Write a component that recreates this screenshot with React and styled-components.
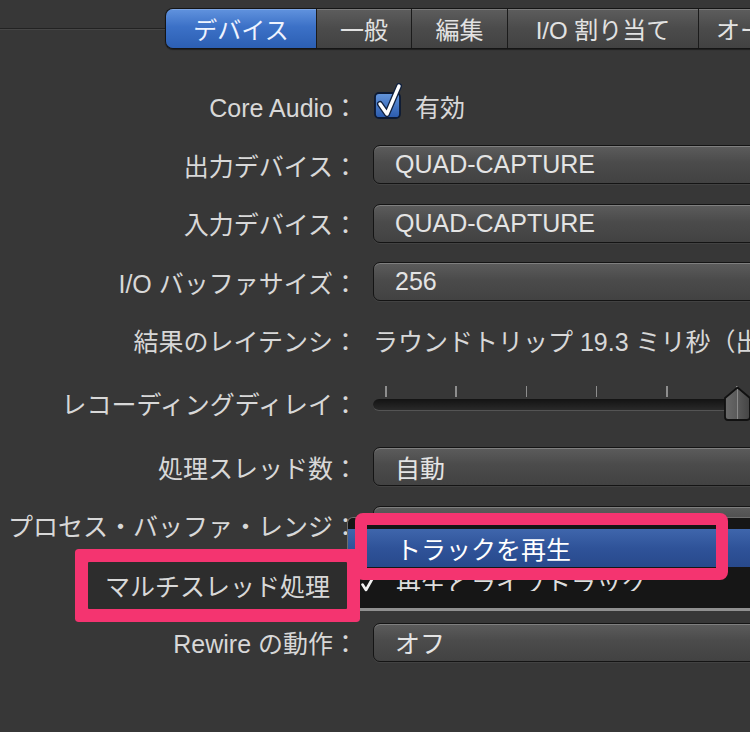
import styled, { createGlobalStyle } from "styled-components";

const GlobalStyle = createGlobalStyle`
  html, body {
    margin: 0;
    padding: 0;
    background: #373737;
  }
  body {
    font-family: "Liberation Sans", "Noto Sans CJK JP", sans-serif;
  }
`;

const Screen = styled.div`
  position: relative;
  width: 750px;
  height: 732px;
  overflow: hidden;
  background: #373737;
  color: #dadada;
  font-size: 25px;
`;

const TabStrip = styled.div`
  display: flex;
  align-items: center;
  padding-top: 9px;
  height: 39px;
`;

const Rule = styled.div`
  flex: 0 0 165px;
  height: 0;
  border-top: 1px solid #222;
  border-bottom: 1px solid #464646;
`;

const Tabs = styled.div`
  display: flex;
  flex-shrink: 0;
  height: 39px;
  border: 1px solid #151515;
  border-right: none;
  border-radius: 8px 0 0 8px;
  overflow: hidden;
  box-shadow: 0 1px 1px rgba(0, 0, 0, 0.45);
`;

const Tab = styled.div`
  flex: 0 0 ${(p) => p.$w}px;
  display: flex;
  align-items: center;
  justify-content: ${(p) => (p.$lead ? "flex-start" : "center")};
  padding-left: ${(p) => (p.$lead ? 17 : 0)}px;
  box-sizing: border-box;
  white-space: nowrap;
  font-size: 24px;
  color: ${(p) => (p.$active ? "#eef3ff" : "#e2e2e2")};
  background: ${(p) =>
    p.$active
      ? "linear-gradient(#6193de, #3c71c7 45%, #2c5fb3)"
      : "linear-gradient(#5d5d5d, #4b4b4b 50%, #424242)"};
  border-left: 1px solid #1b1b1b;
  box-shadow: inset 0 1px 0 rgba(255, 255, 255, 0.18);

  &:first-child {
    border-left: none;
  }
`;

const Form = styled.div`
  display: flex;
  flex-direction: column;
  margin-top: 28.75px;
`;

const Row = styled.div`
  display: grid;
  grid-template-columns: 358px 420px;
  column-gap: 15px;
  align-items: center;
  height: ${(p) => p.$h || 58.5}px;
`;

const Label = styled.div`
  display: flex;
  justify-content: flex-end;
  white-space: nowrap;
  color: #d8d8d8;
`;

const MarkedLabel = styled.span`
  position: relative;
  z-index: 4;
  display: flex;
  align-items: center;
  justify-content: flex-end;
  width: 259px;
  height: 47px;
  margin-right: 11px;
  margin-top: 3px;
  padding-right: 17px;
  box-sizing: border-box;
  background: #2d2d2d;
  box-shadow: 0 0 0 13px #f43470;
  border-radius: 1px;
`;

const Control = styled.div`
  display: flex;
  align-items: center;
  white-space: nowrap;
`;

const Popup = styled.div`
  display: flex;
  align-items: center;
  width: 420px;
  height: 39px;
  box-sizing: border-box;
  padding-left: 21px;
  border: 1.5px solid #141414;
  border-radius: 7px;
  color: #e4e4e4;
  background: linear-gradient(#5c5c5c, #4b4b4b 45%, #424242);
  box-shadow: inset 0 1px 0 rgba(255, 255, 255, 0.22),
    0 1px 0 rgba(255, 255, 255, 0.06);
`;

const CheckBox = styled.svg`
  margin-top: -10px;
  margin-right: 12px;
  flex-shrink: 0;
`;

const Value = styled.span`
  color: #d8d8d8;
`;

const Slider = styled.div`
  position: relative;
  width: 420px;
  height: 35px;
`;

const Ticks = styled.div`
  display: flex;
  gap: 68.8px;
  height: 11px;
  padding-left: 12px;
  margin-bottom: 2px;
`;

const Tick = styled.span`
  width: 1.5px;
  height: 11px;
  background: #8e8e8e;
`;

const Track = styled.div`
  height: 12px;
  border-radius: 6px;
  background: linear-gradient(#131313, #1f1f1f 55%, #292929);
  border-bottom: 1px solid #545454;
  box-sizing: border-box;
`;

const Thumb = styled.svg`
  position: absolute;
  left: 350px;
  top: 0;
`;

const Menu = styled.div`
  position: absolute;
  z-index: 2;
  left: 347px;
  top: 517px;
  width: 420px;
  height: 94px;
  box-sizing: border-box;
  padding-top: 11px;
  background: #161616;
  border: 1.5px solid #6e6e6e;
  border-bottom: 3px solid #909090;
  border-radius: 6px;
`;

const MenuItem = styled.div`
  display: flex;
  align-items: ${(p) => (p.$selected ? "center" : "flex-start")};
  height: ${(p) => (p.$selected ? 38 : 40)}px;
  box-sizing: border-box;
  padding-left: ${(p) => (p.$selected ? 48 : 13)}px;
  padding-top: ${(p) => (p.$selected ? 0 : 7)}px;
  color: ${(p) => (p.$selected ? "#ffffff" : "#dddddd")};
  white-space: nowrap;
  background: ${(p) =>
    p.$selected ? "linear-gradient(#3f66ac, #2f5399 50%, #28498c)" : "transparent"};
`;

const CheckMark = styled.svg`
  margin-top: 3px;
  margin-right: 22px;
  flex-shrink: 0;
`;

const ClippedText = styled.span`
  display: block;
  height: 19px;
  line-height: 25px;
  overflow: hidden;
  margin-top: -2px;
`;

const Annotation = styled.div`
  position: absolute;
  z-index: 3;
  left: 355px;
  top: 513px;
  width: 373px;
  height: 67px;
  box-sizing: border-box;
  border: 12px solid #f43470;
  border-radius: 8px;
  pointer-events: none;
`;

const tabs = [
  { label: "デバイス", w: 150, active: true },
  { label: "一般", w: 95 },
  { label: "編集", w: 96 },
  { label: "I/O 割り当て", w: 191 },
  { label: "オーディオファイル", w: 220, lead: true },
];

const tickCount = [0, 1, 2, 3, 4, 5];

export default function App() {
  return (
    <Screen>
      <GlobalStyle />
      <TabStrip>
        <Rule />
        <Tabs>
          {tabs.map((t) => (
            <Tab key={t.label} $w={t.w} $active={t.active} $lead={t.lead}>
              {t.label}
            </Tab>
          ))}
        </Tabs>
      </TabStrip>

      <Form>
        <Row>
          <Label>Core Audio：</Label>
          <Control>
            <CheckBox width="30" height="36" viewBox="0 0 30 36">
              <defs>
                <linearGradient id="cb" x1="0" y1="0" x2="0" y2="1">
                  <stop offset="0" stopColor="#6496dc" />
                  <stop offset="1" stopColor="#2a5aad" />
                </linearGradient>
              </defs>
              <rect x="2" y="10" width="25" height="25" rx="4" fill="url(#cb)" stroke="#0d1a33" strokeWidth="1.8" />
              <path d="M7 21 L14 31 L26 3" fill="none" stroke="#10213f" strokeWidth="6" strokeLinecap="round" strokeLinejoin="round" />
              <path d="M7 21 L14 31 L26 3" fill="none" stroke="#ffffff" strokeWidth="3.4" strokeLinecap="round" strokeLinejoin="round" />
            </CheckBox>
            <Value>有効</Value>
          </Control>
        </Row>
        <Row>
          <Label>出力デバイス：</Label>
          <Control>
            <Popup>QUAD-CAPTURE</Popup>
          </Control>
        </Row>
        <Row>
          <Label>入力デバイス：</Label>
          <Control>
            <Popup>QUAD-CAPTURE</Popup>
          </Control>
        </Row>
        <Row>
          <Label>I/O バッファサイズ：</Label>
          <Control>
            <Popup>256</Popup>
          </Control>
        </Row>
        <Row>
          <Label>結果のレイテンシ：</Label>
          <Control>
            <Value>ラウンドトリップ 19.3 ミリ秒（出力 11.8 ミリ秒）</Value>
          </Control>
        </Row>
        <Row $h={68}>
          <Label>レコーディングディレイ：</Label>
          <Control>
            <Slider>
              <Ticks>
                {tickCount.map((i) => (
                  <Tick key={i} />
                ))}
              </Ticks>
              <Track />
              <Thumb width="29" height="36" viewBox="0 0 29 36">
                <defs>
                  <linearGradient id="th" x1="0" y1="0" x2="1" y2="0">
                    <stop offset="0" stopColor="#6a6a6a" />
                    <stop offset="0.5" stopColor="#5a5a5a" />
                    <stop offset="1" stopColor="#444" />
                  </linearGradient>
                </defs>
                <path d="M14.5 1.5 L27 12 L27 31 Q27 34 24 34 L5 34 Q2 34 2 31 L2 12 Z" fill="url(#th)" stroke="#111" strokeWidth="1.8" strokeLinejoin="round" />
                <path d="M14.5 3 L14.5 33" stroke="#8a8a8a" strokeWidth="1" />
              </Thumb>
            </Slider>
          </Control>
        </Row>
        <Row>
          <Label>処理スレッド数：</Label>
          <Control>
            <Popup>自動</Popup>
          </Control>
        </Row>
        <Row>
          <Label>プロセス・バッファ・レンジ：</Label>
          <Control>
            <Popup>中</Popup>
          </Control>
        </Row>
        <Row>
          <Label>
            <MarkedLabel>マルチスレッド処理</MarkedLabel>
          </Label>
          <Control>
            <Popup>再生とライブトラック</Popup>
          </Control>
        </Row>
        <Row>
          <Label>Rewire の動作：</Label>
          <Control>
            <Popup>オフ</Popup>
          </Control>
        </Row>
      </Form>

      <Menu>
        <MenuItem $selected>トラックを再生</MenuItem>
        <MenuItem>
          <CheckMark width="13" height="15" viewBox="0 0 13 15">
            <path d="M1.5 7.5 L5 13 L11.5 1.5" fill="none" stroke="#f2f2f2" strokeWidth="2.6" strokeLinecap="round" strokeLinejoin="round" />
          </CheckMark>
          <ClippedText>再生とライブトラック</ClippedText>
        </MenuItem>
      </Menu>
      <Annotation />
    </Screen>
  );
}
